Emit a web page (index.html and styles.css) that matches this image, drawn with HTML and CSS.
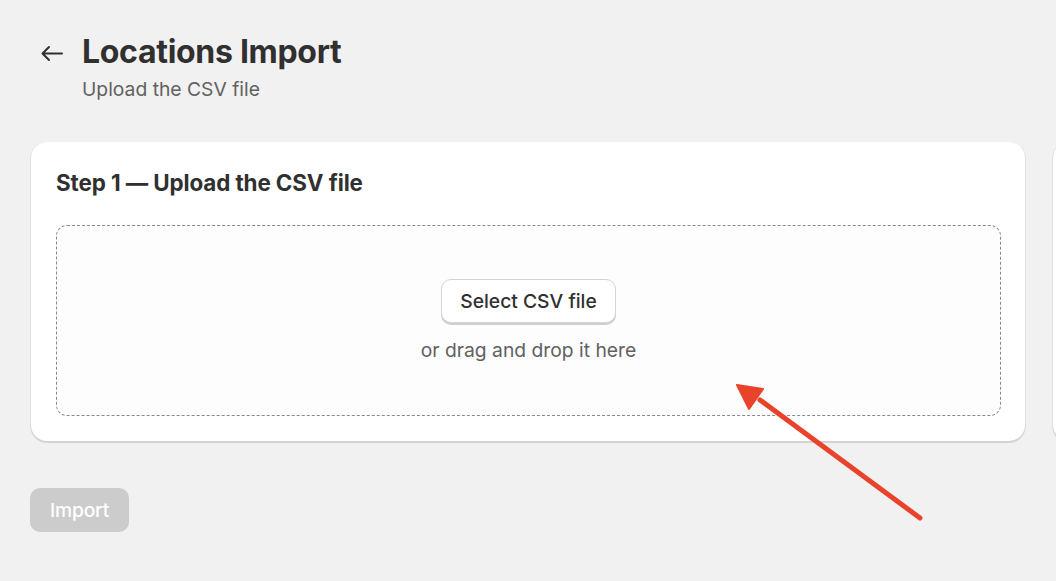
FILE: index.html
```html
<!DOCTYPE html>
<html>
<head>
<meta charset="utf-8">
<link rel="stylesheet" href="styles.css">
</head>
<body>
<div class="page">
  <header class="header">
    <button class="back" aria-label="Back">
      <svg width="25" height="25" viewBox="0 0 25 25"><path d="M23 12.5H3.5M10 6L3.5 12.5 10 19" fill="none" stroke="#303030" stroke-width="2" stroke-linecap="round" stroke-linejoin="round"/></svg>
    </button>
    <div class="titles">
      <h1 class="title">Locations Import</h1>
      <p class="subtitle">Upload the CSV file</p>
    </div>
  </header>
  <div class="cards">
    <section class="card">
      <h2 class="card-title">Step 1 — Upload the CSV file</h2>
      <div class="dropzone">
        <button class="select-btn">Select CSV file</button>
        <p class="hint">or drag and drop it here</p>
      </div>
    </section>
    <section class="card card-next"></section>
  </div>
  <div class="actions">
    <button class="import-btn" disabled>Import</button>
  </div>
</div>
<svg class="annotation" width="1056" height="581" viewBox="0 0 1056 581">
  <line x1="920" y1="518" x2="760" y2="400" stroke="#E9432C" stroke-width="5" stroke-linecap="round"/>
  <polygon points="737,385 763,389 749,409" fill="#E9432C" stroke="#E9432C" stroke-width="2" stroke-linejoin="round"/>
</svg>
</body>
</html>
```
FILE: styles.css
```css
* { box-sizing: border-box; }
html, body { margin: 0; padding: 0; }
body {
  background: #f1f1f1;
  font-family: Inter, "Noto Sans", sans-serif;
  color: #303030;
  width: 1056px;
  height: 581px;
  overflow: hidden;
  position: relative;
}
.page {
  padding: 30px 0 0 31px;
}
.header {
  display: flex;
  align-items: flex-start;
  gap: 18px;
  padding-left: 8px;
}
.back {
  border: 0;
  background: none;
  padding: 0;
  width: 25px;
  height: 25px;
  margin-top: 11px;
  display: flex;
  align-items: center;
  justify-content: center;
  cursor: pointer;
}
.titles { display: flex; flex-direction: column; }
.title {
  margin: 0;
  font-size: 32px;
  font-weight: 700;
  line-height: 44px;
  letter-spacing: -0.3px;
  color: #303030;
}
.subtitle {
  margin: 2px 0 0;
  font-size: 19.3px;
  line-height: 26px;
  color: #616161;
}
.cards {
  display: flex;
  gap: 28px;
  margin-top: 40px;
}
.card {
  flex: 0 0 994px;
  height: 299px;
  background: #fff;
  border-radius: 16px;
  box-shadow: 0 1px 0 1px rgba(0,0,0,0.07), 0 2px 1px rgba(0,0,0,0.06);
  padding: 25px 24px 25px 25px;
  display: flex;
  flex-direction: column;
}
.card-next { flex: 0 0 300px; }
.card-title {
  margin: 0;
  font-size: 22.4px;
  font-weight: 650;
  line-height: 32px;
  letter-spacing: -0.1px;
}
.dropzone {
  margin-top: 26px;
  flex: 1;
  border: 1px dashed #8a8a8a;
  border-radius: 11px;
  background: #fdfdfd;
  display: flex;
  flex-direction: column;
  align-items: center;
  padding-top: 53px;
}
.select-btn {
  font-family: inherit;
  font-size: 19.3px;
  font-weight: 550;
  color: #303030;
  background: #fff;
  border: 1px solid #d4d4d4;
  border-radius: 10px;
  height: 44px;
  width: 175px;
  padding: 0;
  box-shadow: 0 2px 0 #cfcfcf;
}
.hint {
  margin: 14px 0 0;
  font-size: 19.3px;
  line-height: 26px;
  color: #616161;
}
.actions {
  margin-top: 47px;
  margin-left: -1px;
}
.import-btn {
  font-family: inherit;
  font-size: 19.3px;
  font-weight: 550;
  letter-spacing: -0.2px;
  color: #fff;
  background: #cccccc;
  border: 0;
  border-radius: 10px;
  width: 99px;
  height: 44px;
  padding: 0;
}
.annotation {
  position: absolute;
  left: 0;
  top: 0;
  pointer-events: none;
}
```
